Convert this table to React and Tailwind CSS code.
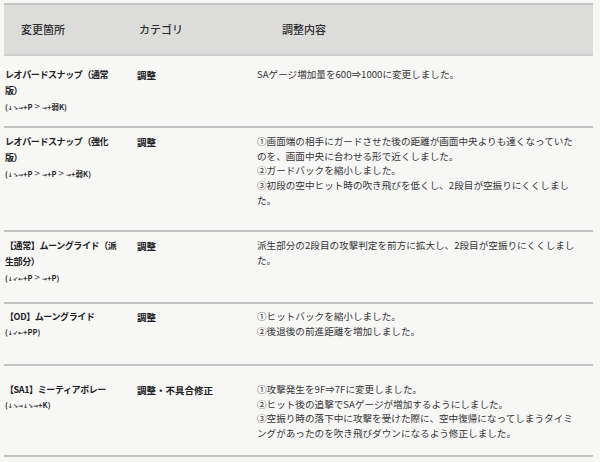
import React from "react";

const rows = [
  {
    pt: "pt-[11px]",
    h: "h-[72px]",
    name: ["レオパードスナップ（通常", "版）"],
    cmd: "(↓↘→+P > →+弱K)",
    cat: "調整",
    desc: ["SAゲージ増加量を600⇒1000に変更しました。"],
  },
  {
    pt: "pt-[6px]",
    h: "h-[104px]",
    name: ["レオパードスナップ（強化", "版）"],
    cmd: "(↓↘→+P > →+P > →+弱K)",
    cat: "調整",
    desc: [
      "①画面端の相手にガードさせた後の距離が画面中央よりも遠くなっていた",
      "のを、画面中央に合わせる形で近くしました。",
      "②ガードバックを縮小しました。",
      "③初段の空中ヒット時の吹き飛びを低くし、2段目が空振りにくくしまし",
      "た。",
    ],
  },
  {
    pt: "pt-[6px]",
    h: "h-[72px]",
    name: ["【通常】ムーングライド（派", "生部分）"],
    cmd: "(↓↙←+P > →+P)",
    cat: "調整",
    desc: ["派生部分の2段目の攻撃判定を前方に拡大し、2段目が空振りにくくしまし", "た。"],
  },
  {
    pt: "pt-[5px]",
    h: "h-[62px]",
    name: ["【OD】ムーングライド"],
    cmd: "(↓↙←+PP)",
    cat: "調整",
    desc: ["①ヒットバックを縮小しました。", "②後退後の前進距離を増加しました。"],
  },
  {
    pt: "pt-[16px]",
    h: "h-[91px]",
    name: ["【SA1】ミーティアボレー"],
    cmd: "(↓↘→↓↘→+K)",
    cat: "調整・不具合修正",
    desc: [
      "①攻撃発生を9F⇒7Fに変更しました。",
      "②ヒット後の追撃でSAゲージが増加するようにしました。",
      "③空振り時の落下中に攻撃を受けた際に、空中復帰になってしまうタイミ",
      "ングがあったのを吹き飛びダウンになるよう修正しました。",
    ],
  },
];

const ARROWS = "↓↘→↙←";

function Cmd({ text }) {
  return (
    <div className="text-[7.5px] leading-[14px] font-bold text-[#2a2a2a] whitespace-nowrap">
      {Array.from(text).map((c, i) => {
        if (ARROWS.includes(c))
          return (
            <span key={i} className="text-[6px] font-bold" style={{ fontFamily: '"DejaVu Sans", sans-serif' }}>
              {c}
            </span>
          );
        if (c === ">")
          return (
            <span key={i} className="text-[10px] font-normal text-[#444]">
              &gt;
            </span>
          );
        if (c === " ") return <span key={i} className="inline-block w-[2px]" />;
        return <span key={i}>{c}</span>;
      })}
    </div>
  );
}

export default function App() {
  return (
    <div
      className="w-[600px] h-[462px] bg-[#f7f7f6] pt-[3px] overflow-hidden"
      style={{ fontFamily: '"Noto Sans CJK JP", "Noto Sans", sans-serif' }}
    >
      <div className="ml-[4px] w-[589px]">
        <div className="flex items-center h-[53px] bg-[#dcdcdb] border-t-2 border-b-2 border-t-[#c4c4c4] border-b-[#cfcfcf] text-[11px] font-medium text-[#2e2e2e]">
          <div className="w-[133px] pl-[17px]">変更箇所</div>
          <div className="w-[120px] pl-[2px]">カテゴリ</div>
          <div className="flex-1 pl-[25px]">調整内容</div>
        </div>
        {rows.map((r, i) => (
          <div key={i} className={`flex ${r.h} ${r.pt} border-b-2 border-[#c2c2c2]`}>
            <div className="w-[133px] pl-[1px]">
              {r.name.map((n, j) => (
                <div key={j} className="text-[9px] leading-[16px] font-bold tracking-[-0.4px] text-[#222] whitespace-nowrap">
                  {n}
                </div>
              ))}
              <Cmd text={r.cmd} />
            </div>
            <div className="w-[120px] text-[9.5px] leading-[16px] font-bold text-[#222] whitespace-nowrap">
              {r.cat}
            </div>
            <div className="flex-1 text-[9.6px] leading-[14.7px] text-[#363636] whitespace-nowrap">
              {r.desc.map((d, j) => (
                <div key={j}>{d}</div>
              ))}
            </div>
          </div>
        ))}
      </div>
    </div>
  );
}
